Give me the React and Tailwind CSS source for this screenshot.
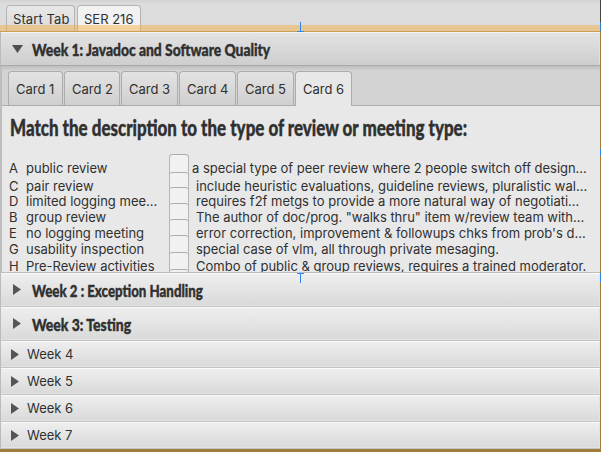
const sans = "font-['Inter','Liberation_Sans',sans-serif]";
const marker = "font-['Lato','Open_Sans',sans-serif] font-black origin-left whitespace-nowrap text-[#303030] [-webkit-text-stroke:0.4px_#303030]";

const cards = [
  { n: 1, w: 'w-[55px]' },
  { n: 2, w: 'w-[56px]' },
  { n: 3, w: 'w-[57px]' },
  { n: 4, w: 'w-[57px]' },
  { n: 5, w: 'w-[57px]' },
  { n: 6, w: 'w-[57px]' },
];

const rows = [
  { h: 'h-[18px]', k: 'A', label: 'public review', text: 'a special type of peer review where 2 people switch off design...', ts: '-ml-1 tracking-[-0.03px]' },
  { h: 'h-[15px]', k: 'C', label: 'pair review', text: 'include heuristic evaluations, guideline reviews, pluralistic wal...', ts: '' },
  { h: 'h-[16px]', k: 'D', label: 'limited logging mee...', text: 'requires f2f metgs to provide a more natural way of negotiati...', ts: '' },
  { h: 'h-[16px]', k: 'B', label: 'group review', text: 'The author of doc/prog. "walks thru" item w/review team with...', ts: 'tracking-[-0.03px]' },
  { h: 'h-[16px]', k: 'E', label: 'no logging meeting', text: "error correction, improvement & followups chks from prob's d...", ts: '' },
  { h: 'h-[17px]', k: 'G', label: 'usability inspection', text: 'special case of vlm, all through private mesaging.', ts: 'tracking-[-0.02px]' },
  { h: 'h-[15px]', k: 'H', label: 'Pre-Review activities', text: 'Combo of public & group reviews, requires a trained moderator.', ts: 'tracking-[0.01px]' },
];

const fields = ['h-[18px]', 'h-[15px]', 'h-[16px]', 'h-[16px]', 'h-[16px]', 'h-[17px]', 'h-[17px]', 'h-[3px]'];

function Arrow({ className }) {
  return (
    <svg className={className} width="8" height="11" viewBox="0 0 8 11">
      <path d="M0 0L8 5.5L0 11Z" fill="#555" />
    </svg>
  );
}

function Marker({ className }) {
  return (
    <svg className={`absolute left-[297px] ${className}`} width="7" height="10" viewBox="0 0 7 10">
      <path d="M3.5 0V9M0 9.5H7" stroke="#2d86f0" fill="none" />
    </svg>
  );
}

function WeekBar({ tall, children }) {
  return (
    <div
      className={`flex items-center border-b border-l border-b-[#c3c3c3] border-l-[#bbb] bg-gradient-to-b from-[#efefef] to-[#d9d9d9] shadow-[inset_0_1px_#fafafa,inset_-1px_-1px_#e3e3e3] ${tall ? 'h-[34px]' : 'h-[27px]'}`}
    >
      <Arrow className={tall ? 'ml-3' : 'ml-[10px]'} />
      {children}
    </div>
  );
}

export default function App() {
  return (
    <div className={`relative h-[452px] w-[601px] overflow-hidden bg-[#a07c3e] text-[13px] leading-4 text-[#303030] ${sans}`}>
      <div className="w-[600px]">
        <div className="flex h-8 items-end gap-[2px] bg-gradient-to-b from-[#d2d2d2] to-[#dcdcdc] to-[12%] pl-[6px]">
          <div className="h-[27px] w-[69px] whitespace-nowrap rounded-t-[4px] border border-b-0 border-[#b4b4b4] bg-gradient-to-b from-[#e8e8e8] to-[#dadada] pl-[6px] pt-[5px]">
            <span className="tracking-[0.1px]">Start Tab</span>
          </div>
          <div className="h-[27px] w-[64px] whitespace-nowrap rounded-t-[4px] border border-b-0 border-[#b4b4b4] bg-[#f2f2f2] pl-[6px] pt-[5px]">
            <span>SER 216</span>
          </div>
        </div>

        <div className="flex h-[34px] items-center border-b border-l border-b-[#a9a9a9] border-l-[#bbb] bg-gradient-to-b from-[#e3e3e3] to-[#cecece] shadow-[inset_0_1px_#f4f4f4,inset_-1px_0_#e0e0e0]">
          <svg className="ml-[11px]" width="11" height="8" viewBox="0 0 11 8">
            <path d="M0 0H11L5.5 8Z" fill="#505050" />
          </svg>
          <span className={`ml-[9px] pt-[3px] text-[17px] scale-x-[0.815] ${marker}`}>Week 1: Javadoc and Software Quality</span>
        </div>

        <div className="h-[206px] border-l-2 border-[#bdbdbd] bg-[#e8e8e8]">
          <div className="flex h-10 items-end gap-px border-b border-[#acacac] bg-gradient-to-b from-[#bdbdbd] to-[#d3d3d3] to-[12%] pl-[6px]">
            {cards.map(({ n, w }) => (
              <div
                key={n}
                className={`whitespace-nowrap rounded-t-[4px] border border-b-0 border-[#acacac] pl-[7px] pt-[9px] ${w} ${n === 6 ? '-mb-px h-[35px] bg-[#e8e8e8]' : 'h-[34px] bg-gradient-to-b from-[#e3e3e3] to-[#cfcfcf]'}`}
              >
                Card {n}
              </div>
            ))}
          </div>
          <div className="flex h-12 items-center pb-[5px] pl-2">
            <h1 className={`text-[22px] leading-6 scale-x-[0.77] ${marker}`}>Match the description to the type of review or meeting type:</h1>
          </div>
          <div className="flex h-[118px]">
            <div className="w-[165px] pl-[7px] pt-[6px]">
              {rows.map((r) => (
                <div key={r.k} className={`flex whitespace-nowrap ${r.h}`}>
                  <span className="w-[17px]">{r.k}</span>
                  <span>{r.label}</span>
                </div>
              ))}
            </div>
            <div className="ml-[2px] w-5">
              {fields.map((h, i) => (
                <div key={i} className={`border-x border-[#b5b5b5] bg-[#f1f1f1] ${h} ${i === 0 ? 'rounded-t-[4px]' : ''}`}>
                  <div className="-mx-px h-1 rounded-t-[4px] border-t border-[#adadad]" />
                </div>
              ))}
            </div>
            <div className="pl-[7px] pt-[6px]">
              {rows.map((r) => (
                <div key={r.k} className={`whitespace-nowrap ${r.h}`}>
                  <span className={r.ts}>{r.text}</span>
                </div>
              ))}
            </div>
          </div>
        </div>

        <div className="relative border-t border-[#bdbdbd]">
          <WeekBar tall>
            <span className={`ml-[11px] pt-[3px] text-[17px] scale-x-[0.78] ${marker}`}>Week 2 : Exception Handling</span>
          </WeekBar>
          <WeekBar tall>
            <span className={`ml-[11px] pt-[3px] text-[17px] scale-x-[0.82] ${marker}`}>Week 3: Testing</span>
          </WeekBar>
          {[4, 5, 6, 7].map((n) => (
            <WeekBar key={n}>
              <span className="ml-2">Week {n}</span>
            </WeekBar>
          ))}
        </div>
      </div>

      <div className="absolute left-0 top-[25px] h-[7px] w-[600px] border-b border-[#c9a059] bg-[#f5ab35]/45" />
      <Marker className="top-[22px]" />
      <Marker className="top-[273px] rotate-180" />
      <div className="absolute right-0 top-0 h-[22px] w-px bg-[#444]" />
      <div className="absolute right-0 top-[22px] h-[9px] w-px bg-[#2d7be0]" />
      <div className="absolute right-0 top-[149px] h-[7px] w-px bg-[#2d86f0]" />
      <div className="absolute right-0 top-[273px] h-[9px] w-px bg-[#2d86f0]" />
    </div>
  );
}
